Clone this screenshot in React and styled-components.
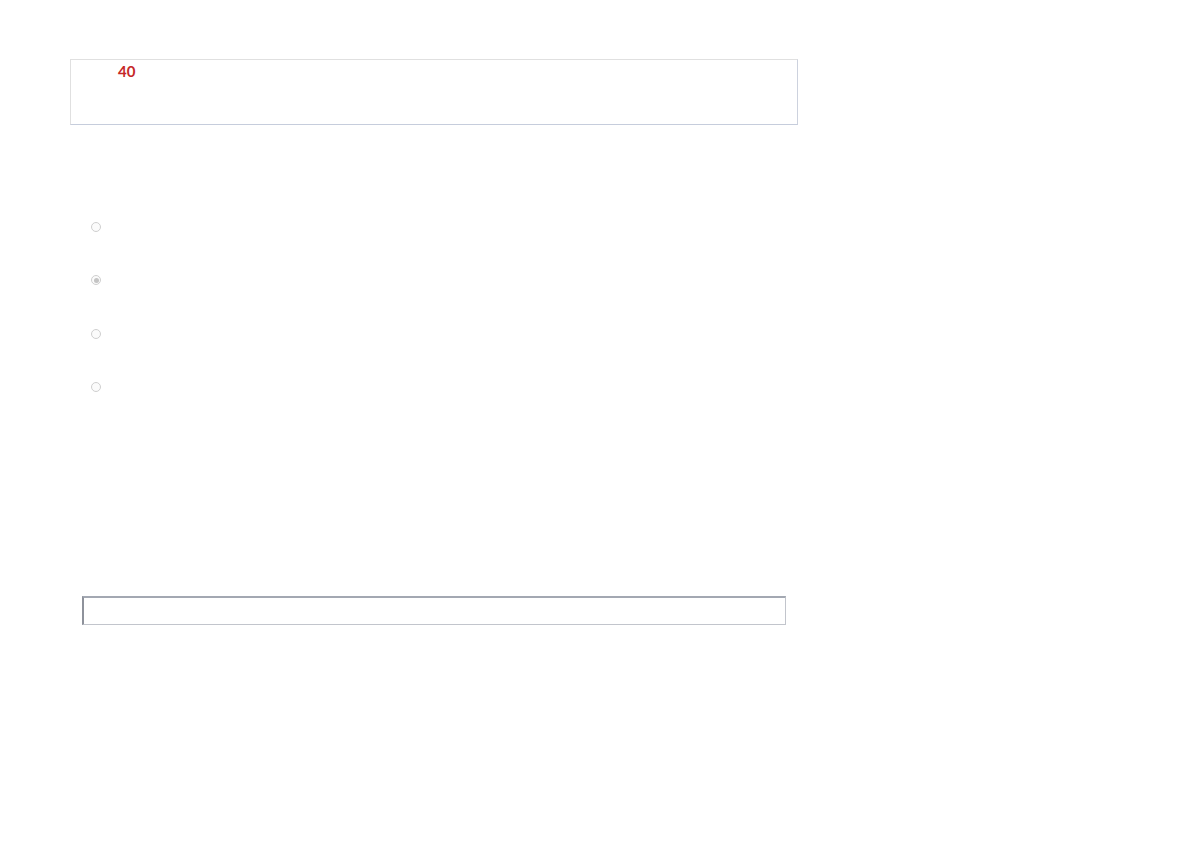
import React from 'react';
import styled, { createGlobalStyle } from 'styled-components';

const GlobalStyle = createGlobalStyle`
  body {
    margin: 0;
    background: #ffffff;
    font-family: Lato, "Liberation Sans", sans-serif;
  }
`;

const Page = styled.div`
  padding: 59px 0 0 70px;
  width: 728px;
`;

const ScoreCard = styled.div`
  box-sizing: border-box;
  height: 66px;
  padding: 1px 0 0 47px;
  border: 1px solid #e0e0e0;
  border-right-color: #cdd2de;
  border-bottom-color: #c6cddc;
`;

const Score = styled.span`
  color: #c62828;
  font-size: 15px;
  font-weight: 700;
  line-height: 18px;
`;

const Options = styled.div`
  display: flex;
  flex-direction: column;
  gap: 43.3px;
  margin: 97px 0 0 21px;
`;

const Radio = styled.span`
  box-sizing: border-box;
  display: block;
  width: 10px;
  height: 10px;
  border-radius: 50%;
  border: 1px solid #cfcfcf;
  background: #fbfbfb;
  position: relative;

  &::after {
    content: '';
    display: ${(props) => (props.checked ? 'block' : 'none')};
    position: absolute;
    inset: 1.5px;
    border-radius: 50%;
    background: #c4c4c4;
  }
`;

const Answer = styled.input`
  display: block;
  box-sizing: border-box;
  width: 704px;
  height: 29px;
  margin: 204px 0 0 12px;
  padding: 0 6px;
  border-style: solid;
  border-width: 2px 1px 1px 2px;
  border-color: #a3a8b2 #c2c5cc #c2c5cc #8e929b;
  background: #fff;
  outline: none;
`;

const options = [false, true, false, false];

export default function App() {
  return (
    <>
      <GlobalStyle />
      <Page>
        <ScoreCard>
          <Score>40</Score>
        </ScoreCard>
        <Options>
          {options.map((checked, i) => (
            <Radio key={i} checked={checked} />
          ))}
        </Options>
        <Answer type="text" readOnly />
      </Page>
    </>
  );
}
